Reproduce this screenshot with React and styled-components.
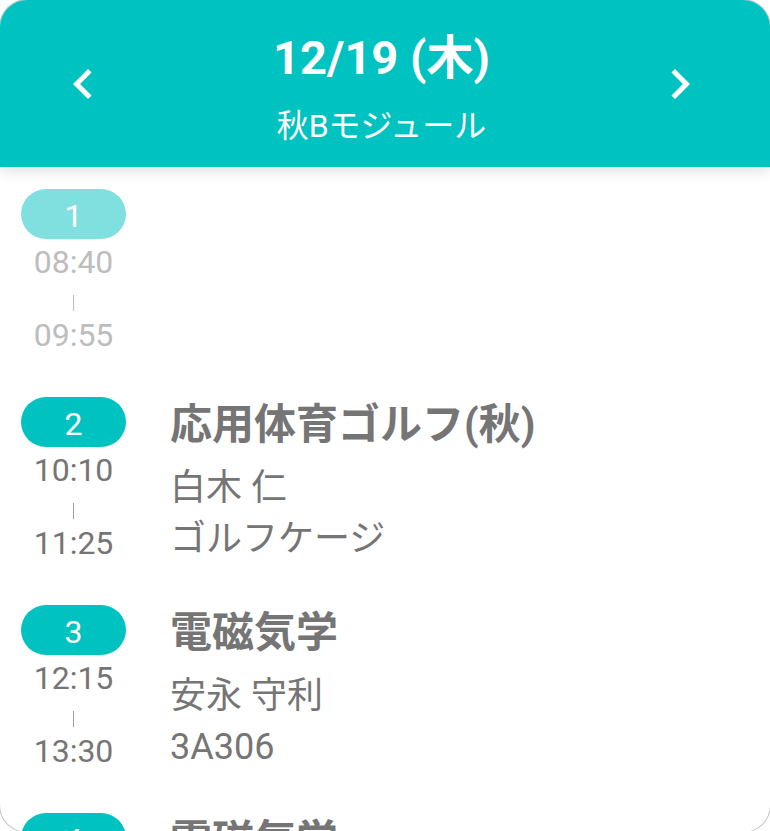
import React from 'react';
import styled, { createGlobalStyle } from 'styled-components';
import { MdChevronLeft, MdChevronRight } from 'react-icons/md';

const GlobalStyle = createGlobalStyle`
    html, body {
        margin: 0;
        padding: 0;
        overflow: hidden;
        background: #ffffff;
    }
    body {
        font-family: Roboto, "Noto Sans CJK JP", sans-serif;
    }
`;

const Card = styled.div`
    width: 770px;
    height: 832px;
    border-radius: 27px;
    overflow: hidden;
    background: #ffffff;
    box-shadow: 0 0 0 1px rgba(0, 0, 0, 0.22);
    display: flex;
    flex-direction: column;
`;

const Header = styled.header`
    position: relative;
    z-index: 2;
    height: 167px;
    flex-shrink: 0;
    background: #00c2c1;
    box-shadow: 0 3px 14px rgba(0, 0, 0, 0.14);
    display: grid;
    grid-template-columns: 1fr auto 1fr;
    align-items: center;
    padding: 0 60px 0 53px;
    color: #ffffff;
`;

const NavButton = styled.button`
    border: none;
    background: none;
    padding: 0;
    color: #ffffff;
    display: flex;
    justify-self: ${(p) => (p.right ? 'end' : 'start')};
    cursor: pointer;
`;

const DateBox = styled.div`
    display: flex;
    flex-direction: column;
    align-items: center;
    padding-top: 7px;
`;

const DateTitle = styled.div`
    font-size: 47px;
    font-weight: 700;
    line-height: 60px;
`;

const Module = styled.div`
    font-size: 32px;
    line-height: 40px;
    margin-top: 18px;
`;

const List = styled.div`
    padding: 22px 0 0 21px;
`;

const Row = styled.div`
    display: flex;
    align-items: flex-start;
    height: 208px;
`;

const Period = styled.div`
    width: 105px;
    display: flex;
    flex-direction: column;
    align-items: center;
    color: ${(p) => (p.past ? '#bdbdbd' : '#757575')};
`;

const Badge = styled.div`
    width: 105px;
    height: 50px;
    border-radius: 25px;
    background: ${(p) => (p.past ? '#80e0e0' : '#00c2c1')};
    color: #ffffff;
    font-size: 32px;
    line-height: 54px;
    text-align: center;
`;

const Time = styled.div`
    font-size: 32px;
    line-height: 36px;
    margin-top: ${(p) => p.top || 0}px;
`;

const Dash = styled.div`
    width: 1px;
    height: 16px;
    margin: 15px 0 6px;
    background: ${(p) => (p.past ? '#bdbdbd' : '#9e9e9e')};
`;

const Detail = styled.div`
    margin-left: 44px;
    color: #757575;
`;

const Subject = styled.div`
    font-size: 42px;
    font-weight: 700;
    line-height: 56px;
    margin-bottom: 10px;
`;

const Info = styled.div`
    font-size: 36px;
    line-height: 51px;
`;

const periods = [
    { no: 1, start: '08:40', end: '09:55', past: true },
    { no: 2, start: '10:10', end: '11:25', subject: '応用体育ゴルフ(秋)', teacher: '白木 仁', room: 'ゴルフケージ' },
    { no: 3, start: '12:15', end: '13:30', subject: '電磁気学', teacher: '安永 守利', room: '3A306' },
    { no: 4, start: '13:45', end: '15:00', subject: '電磁気学', teacher: '安永 守利', room: '3A306' },
];

function App() {
    return (
        <>
            <GlobalStyle />
            <Card>
                <Header>
                    <NavButton aria-label="前の日">
                        <MdChevronLeft size={60} />
                    </NavButton>
                    <DateBox>
                        <DateTitle>12/19 (木)</DateTitle>
                        <Module>秋Bモジュール</Module>
                    </DateBox>
                    <NavButton right aria-label="次の日">
                        <MdChevronRight size={60} />
                    </NavButton>
                </Header>
                <List>
                    {periods.map((p) => (
                        <Row key={p.no}>
                            <Period past={p.past}>
                                <Badge past={p.past}>{p.no}</Badge>
                                <Time top={5}>{p.start}</Time>
                                <Dash past={p.past} />
                                <Time>{p.end}</Time>
                            </Period>
                            {p.subject && (
                                <Detail>
                                    <Subject>{p.subject}</Subject>
                                    <Info>{p.teacher}</Info>
                                    <Info>{p.room}</Info>
                                </Detail>
                            )}
                        </Row>
                    ))}
                </List>
            </Card>
        </>
    );
}

export default App;
